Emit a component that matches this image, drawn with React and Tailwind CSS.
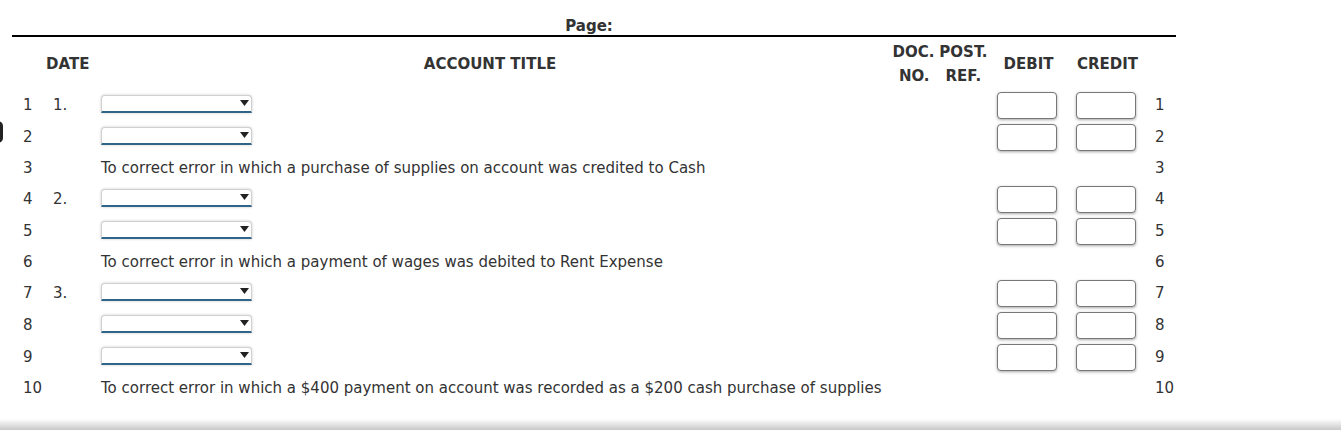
import React from 'react'

const rows = [
  { n: 1, date: '1.', kind: 'entry' },
  { n: 2, kind: 'entry' },
  { n: 3, kind: 'note', text: 'To correct error in which a purchase of supplies on account was credited to Cash' },
  { n: 4, date: '2.', kind: 'entry' },
  { n: 5, kind: 'entry' },
  { n: 6, kind: 'note', text: 'To correct error in which a payment of wages was debited to Rent Expense' },
  { n: 7, date: '3.', kind: 'entry' },
  { n: 8, kind: 'entry' },
  { n: 9, kind: 'entry' },
  { n: 10, kind: 'note', text: 'To correct error in which a $400 payment on account was recorded as a $200 cash purchase of supplies' },
]

function Select() {
  return (
    <div className="relative w-[151px] h-[18px] bg-white border border-[#d0d0d0] border-b-2 border-b-[#2f6687] rounded-t-[4px] shadow-[0_0_3px_rgba(0,0,0,0.2)]">
      <svg className="absolute right-[2px] top-[4px]" width="9" height="6" viewBox="0 0 9 6">
        <path d="M0 0h9L4.5 6z" fill="#222" />
      </svg>
    </div>
  )
}

function Amount() {
  return (
    <div className="w-[60px] h-[27px] bg-white border border-[#777] rounded-[4px] shadow-[0_1px_3px_rgba(0,0,0,0.35)]" />
  )
}

export default function App() {
  return (
    <div className="relative h-[430px] w-[1341px] bg-white text-[#333] flex flex-col overflow-hidden" style={{ fontFamily: '"DejaVu Sans", Verdana, sans-serif' }}>
      {/* partial shape at left edge */}
      <div className="absolute left-[-7px] top-[121px] w-[10px] h-[22px] rounded-full bg-[#222]" />

      <div className="w-[1164px] ml-[12px]">
        <div className="h-[35px] flex items-center justify-center pr-[10px] pt-[17px] text-[15px] font-bold">
          Page:
        </div>
        <div className="h-[2px] bg-black" />

        {/* Header */}
        <div className="flex h-[52px] items-center pt-[2px] text-[15px] font-bold">
          <div className="w-[34px]" />
          <div className="w-[55px]">DATE</div>
          <div className="w-[790px] text-center pr-[12px]">ACCOUNT TITLE</div>
          <div className="w-[98px] flex flex-col items-center leading-[24px]">
            <div className="flex gap-[5px]"><span>DOC.</span><span>POST.</span></div>
            <div className="flex gap-[16px]"><span>NO.</span><span>REF.</span></div>
          </div>
          <div className="w-[79px] text-center">DEBIT</div>
          <div className="w-[79px] text-center">CREDIT</div>
        </div>

        {/* Rows */}
        {rows.map((r) => (
          <div key={r.n} className={`flex items-center text-[15px] ${r.kind === 'entry' ? 'h-[32px]' : 'h-[30px]'}`}>
            <div className="w-[41px] pl-[11px]">{r.n}</div>
            <div className="w-[48px]">{r.date}</div>
            {r.kind === 'entry' ? (
              <>
                <div className="w-[896px] pb-[3px]">
                  <Select />
                </div>
                <div className="w-[79px]">
                  <Amount />
                </div>
                <div className="w-[79px]">
                  <Amount />
                </div>
              </>
            ) : (
              <div className="w-[1054px] whitespace-nowrap">{r.text}</div>
            )}
            <div>{r.n}</div>
          </div>
        ))}
      </div>

      <div className="flex-1" />
      <div className="h-[11px] bg-gradient-to-b from-white to-[#c8c8c8]" />
    </div>
  )
}
